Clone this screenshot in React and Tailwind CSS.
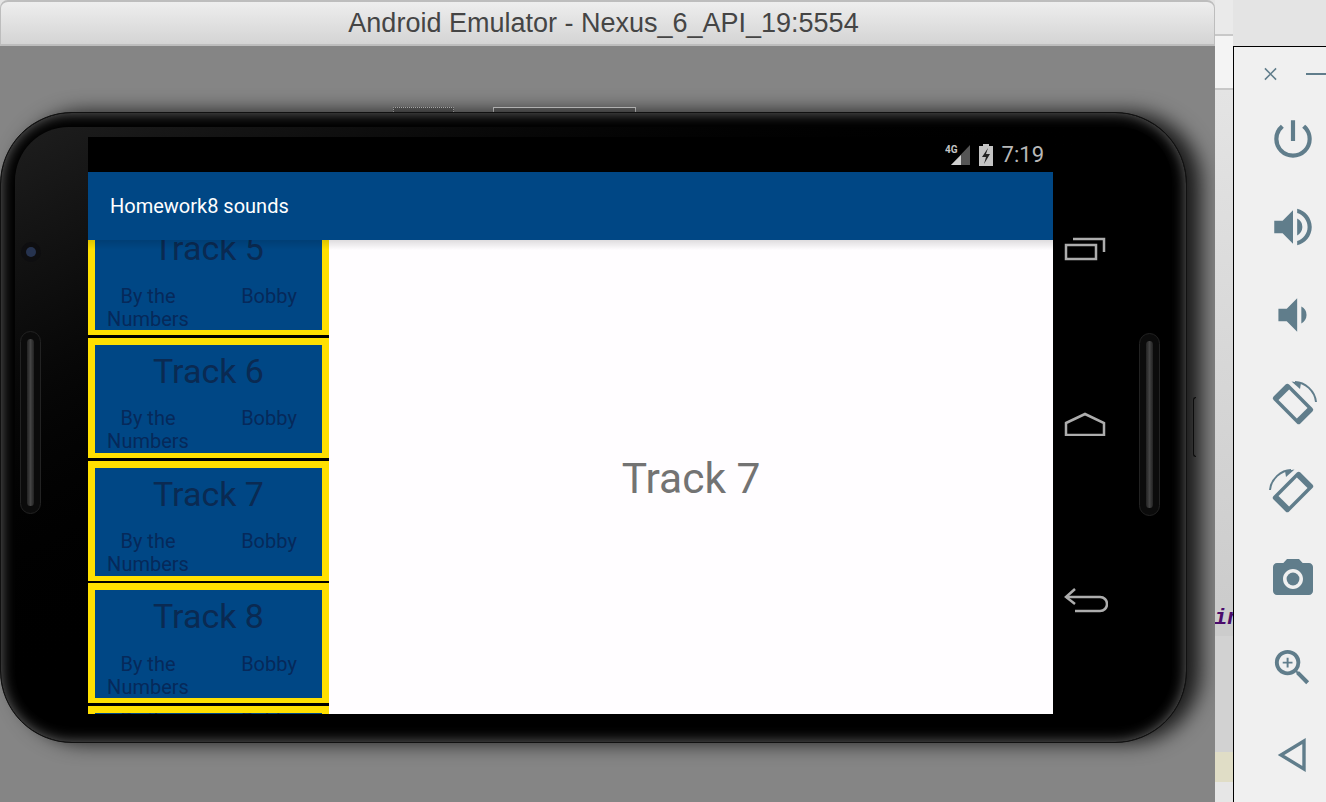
import { MdPowerSettingsNew, MdVolumeUp, MdVolumeDown, MdCameraAlt, MdZoomIn } from "react-icons/md";

const roboto = "font-['Roboto',sans-serif]";

const TrackItem = ({ name, cut }) => (
  <div className="h-[120px] mb-[2.67px] shrink-0 border-x-[7px] border-t-[7px] border-b-[5px] border-[#ffe000] bg-[#004785] overflow-hidden">
    {!cut && (
      <div className="h-[50px] text-center text-[34px] leading-[53px] text-[#0a2a52]">{name}</div>
    )}
    <div className={`flex justify-between text-center text-[20px] leading-[23px] text-[#06295a] ${cut ? "-mt-[4px]" : "mt-[12.4px]"}`}>
      <div className="w-[106px]">By the Numbers</div>
      <div className="w-[106px]">Bobby</div>
    </div>
  </div>
);

const Speaker = () => (
  <div className="w-[21px] h-[183px] rounded-full bg-[#0b0b0b] border border-[#222] flex items-stretch justify-center py-[7px]">
    <div className="w-[7px] rounded-full bg-gradient-to-r from-[#222] via-[#444] to-[#222]" />
  </div>
);

const RotateIcon = ({ flip }) => (
  <svg width="48" height="48" viewBox="0 0 48 48" className={`overflow-visible mt-[2px] ${flip ? "-scale-x-100" : ""}`}>
    <g transform="rotate(-45 24 24)">
      <rect x="13" y="5" width="22" height="38" rx="2.5" fill="#607d8b" />
      <rect x="16.5" y="11" width="15" height="26" fill="#f0f0f0" />
    </g>
    <path d="M26 2 C36 2 46 11 47 22" fill="none" stroke="#607d8b" strokeWidth="2" />
    <path d="M22.5 1.5 L32 3 L31 9 Z" fill="#607d8b" />
  </svg>
);

export default function App() {
  return (
    <div className={`w-[1326px] h-[802px] overflow-hidden flex bg-[#e4e4e4] ${roboto}`}>
      {/* emulator window */}
      <div className="w-[1215px] h-full flex flex-col shrink-0">
        <div className="h-[46px] shrink-0 rounded-t-[8px] border-t-2 border-b-2 border-x border-[#bdbdbd] bg-gradient-to-b from-[#eeeeee] to-[#d4d4d4] flex items-center justify-center pr-[8px]">
          <span className="font-['Liberation_Sans',sans-serif] text-[27px] text-[#454545]">Android Emulator - Nexus_6_API_19:5554</span>
        </div>
        <div className="flex-1 bg-[#858585] overflow-hidden pt-[61px]">
          <div className="h-[5px] flex pl-[393px] gap-[39px]">
            <div className="w-[61px] h-[5px] rounded-t-[1px] border-t border-x border-dotted border-[#ddd] bg-[#666]" />
            <div className="w-[143px] h-[5px] rounded-t-[1px] border-t border-x border-[#eee] bg-[#6e6e6e]" />
          </div>
          <div className="flex">
            {/* phone */}
            <div className="w-[1187px] h-[631px] shrink-0 rounded-[72px] bg-black border border-[#111] p-[14px] pb-[16px] shadow-[14px_0_20px_rgba(0,0,0,0.8),inset_0_0_14px_rgba(255,255,255,0.42)]">
              <div className="h-full rounded-[54px] bg-gradient-to-br from-[#1e1e1e] via-black via-50% to-black flex pt-[10px]">
                <div className="w-[73px] shrink-0 flex flex-col pl-[5px]">
                  <div className="mt-[105px] ml-[1px] w-[20px] h-[20px] rounded-full bg-[#0e0e10] flex items-center justify-center">
                    <div className="w-[10px] h-[10px] rounded-full bg-[#26334f]" />
                  </div>
                  <div className="mt-[69px]">
                    <Speaker />
                  </div>
                </div>
                {/* android screen */}
                <div className="w-[965px] h-[577px] shrink-0 flex flex-col relative">
                  <div className="h-[35px] shrink-0 bg-black flex items-center justify-end pr-[9px]">
                    <svg width="26" height="22" viewBox="0 0 26 22" className="mr-[7px]">
                      <path d="M25 1 V21 H6 Z" fill="#555" />
                      <path d="M16 11 V21 H6 Z" fill="#d0d0d0" />
                      <text x="0" y="9" fontSize="10" fontWeight="700" fill="#c4c4c4" fontFamily="Roboto">4G</text>
                    </svg>
                    <svg width="16" height="22" viewBox="0 0 16 22" className="mr-[8px]">
                      <path d="M5 0 H11 V2 H15 V22 H1 V2 H5 Z" fill="#c4c4c4" />
                      <path d="M10 4 L4 13 H8 L6 20 L12 10 H8 Z" fill="#222" />
                    </svg>
                    <span className="text-[22px] leading-none text-[#b8b8b8]">7:19</span>
                  </div>
                  <div className="h-[68px] shrink-0 bg-[#004785] flex items-center pl-[22px] text-white text-[20px]">Homework8 sounds</div>
                  <div className="flex-1 flex overflow-hidden relative">
                    <div className="w-[241px] shrink-0 flex flex-col bg-black -mt-[24.67px]">
                      <TrackItem name="Track 5" />
                      <TrackItem name="Track 6" />
                      <TrackItem name="Track 7" />
                      <TrackItem name="Track 8" />
                      <TrackItem cut />
                    </div>
                    <div className="flex-1 bg-[#fffdff] flex items-center justify-center text-[42.5px] text-[#737373] pt-[4px]">Track 7</div>
                    <div className="absolute top-0 inset-x-0 h-[10px] bg-gradient-to-b from-[rgba(0,0,0,0.13)] to-transparent" />
                  </div>
                </div>
                {/* nav buttons */}
                <div className="w-[60px] shrink-0 pt-[100px] pl-[11px] flex flex-col gap-[151px]">
                  <svg width="42" height="24" viewBox="0 0 42 24" fill="none" stroke="#adadad" strokeWidth="2.5">
                    <rect x="2" y="8" width="30" height="14" />
                    <path d="M9 2 H40 V15" />
                  </svg>
                  <svg width="42" height="24" viewBox="0 0 42 24" fill="none" stroke="#adadad" strokeWidth="2.5">
                    <path d="M2 11 L21 2 L40 11 V23 H2 Z" />
                  </svg>
                  <svg width="44" height="26" viewBox="0 0 44 26" fill="none" stroke="#adadad" strokeWidth="2.5">
                    <path d="M11 2 L2 10 L11 17" />
                    <path d="M2 10 H36 C40 10 43 13 43 17 C43 21 40 24 36 24 H11" />
                  </svg>
                </div>
                <div className="flex-1 pl-[26px] pt-[196px]">
                  <Speaker />
                </div>
              </div>
            </div>
            {/* power button on the phone's edge */}
            <div className="w-[3px] h-[60px] mt-[285px] ml-[6px] rounded-l-[3px] border-l border-y border-[#0c0c0c]" />
          </div>
        </div>
      </div>
      {/* strip of the IDE behind */}
      <div className="w-[18px] h-full shrink-0 flex flex-col overflow-hidden">
        <div className="h-[34px] shrink-0 bg-[#eaeaea]" />
        <div className="h-[56px] shrink-0 border-y-2 border-[#c8c8c8] bg-[#f4f4f4]" />
        <div className="h-[512px] shrink-0 bg-gradient-to-b from-[#e4e4e4] to-[#cccccc]" />
        <div className="h-[34px] shrink-0 bg-[#cccccc] font-['Liberation_Mono',monospace] font-bold italic text-[22px] leading-[34px] text-[#4b0b6b] whitespace-nowrap -ml-[1px]">int</div>
        <div className="h-[116px] shrink-0 bg-[#d2d2d2]" />
        <div className="h-[30px] shrink-0 bg-[#e0ddc6]" />
        <div className="flex-1 bg-[#e6e6e6]" />
      </div>
      {/* emulator toolbar */}
      <div className="flex-1 mt-[46px] border-l border-t border-black bg-[#f0f0f0] flex flex-col overflow-hidden">
        <div className="h-[48px] shrink-0 flex items-center pl-[30px] pt-[6px]">
          <svg width="14" height="14" viewBox="0 0 14 14" stroke="#607d8b" strokeWidth="1.7">
            <path d="M1 1 L13 13 M13 1 L1 13" />
          </svg>
          <div className="ml-[29px] w-[20px] h-[2px] bg-[#607d8b] shrink-0" />
        </div>
        <div className="flex flex-col pl-[25px] text-[#607d8b]">
          <div className="h-[88px] flex items-center justify-center"><MdPowerSettingsNew size={50} /></div>
          <div className="h-[88px] flex items-center justify-center"><MdVolumeUp size={50} /></div>
          <div className="h-[88px] flex items-center justify-center"><MdVolumeDown size={50} /></div>
          <div className="h-[88px] flex items-center justify-center"><RotateIcon /></div>
          <div className="h-[88px] flex items-center justify-center"><RotateIcon flip /></div>
          <div className="h-[88px] flex items-center justify-center"><MdCameraAlt size={48} /></div>
          <div className="h-[88px] flex items-center justify-center"><MdZoomIn size={47} /></div>
          <div className="h-[88px] flex items-center justify-center">
            <svg width="32" height="34" viewBox="0 0 32 34" fill="none" stroke="#607d8b" strokeWidth="3.4">
              <path d="M27 3 V31 L4 17 Z" />
            </svg>
          </div>
        </div>
      </div>
    </div>
  );
}
